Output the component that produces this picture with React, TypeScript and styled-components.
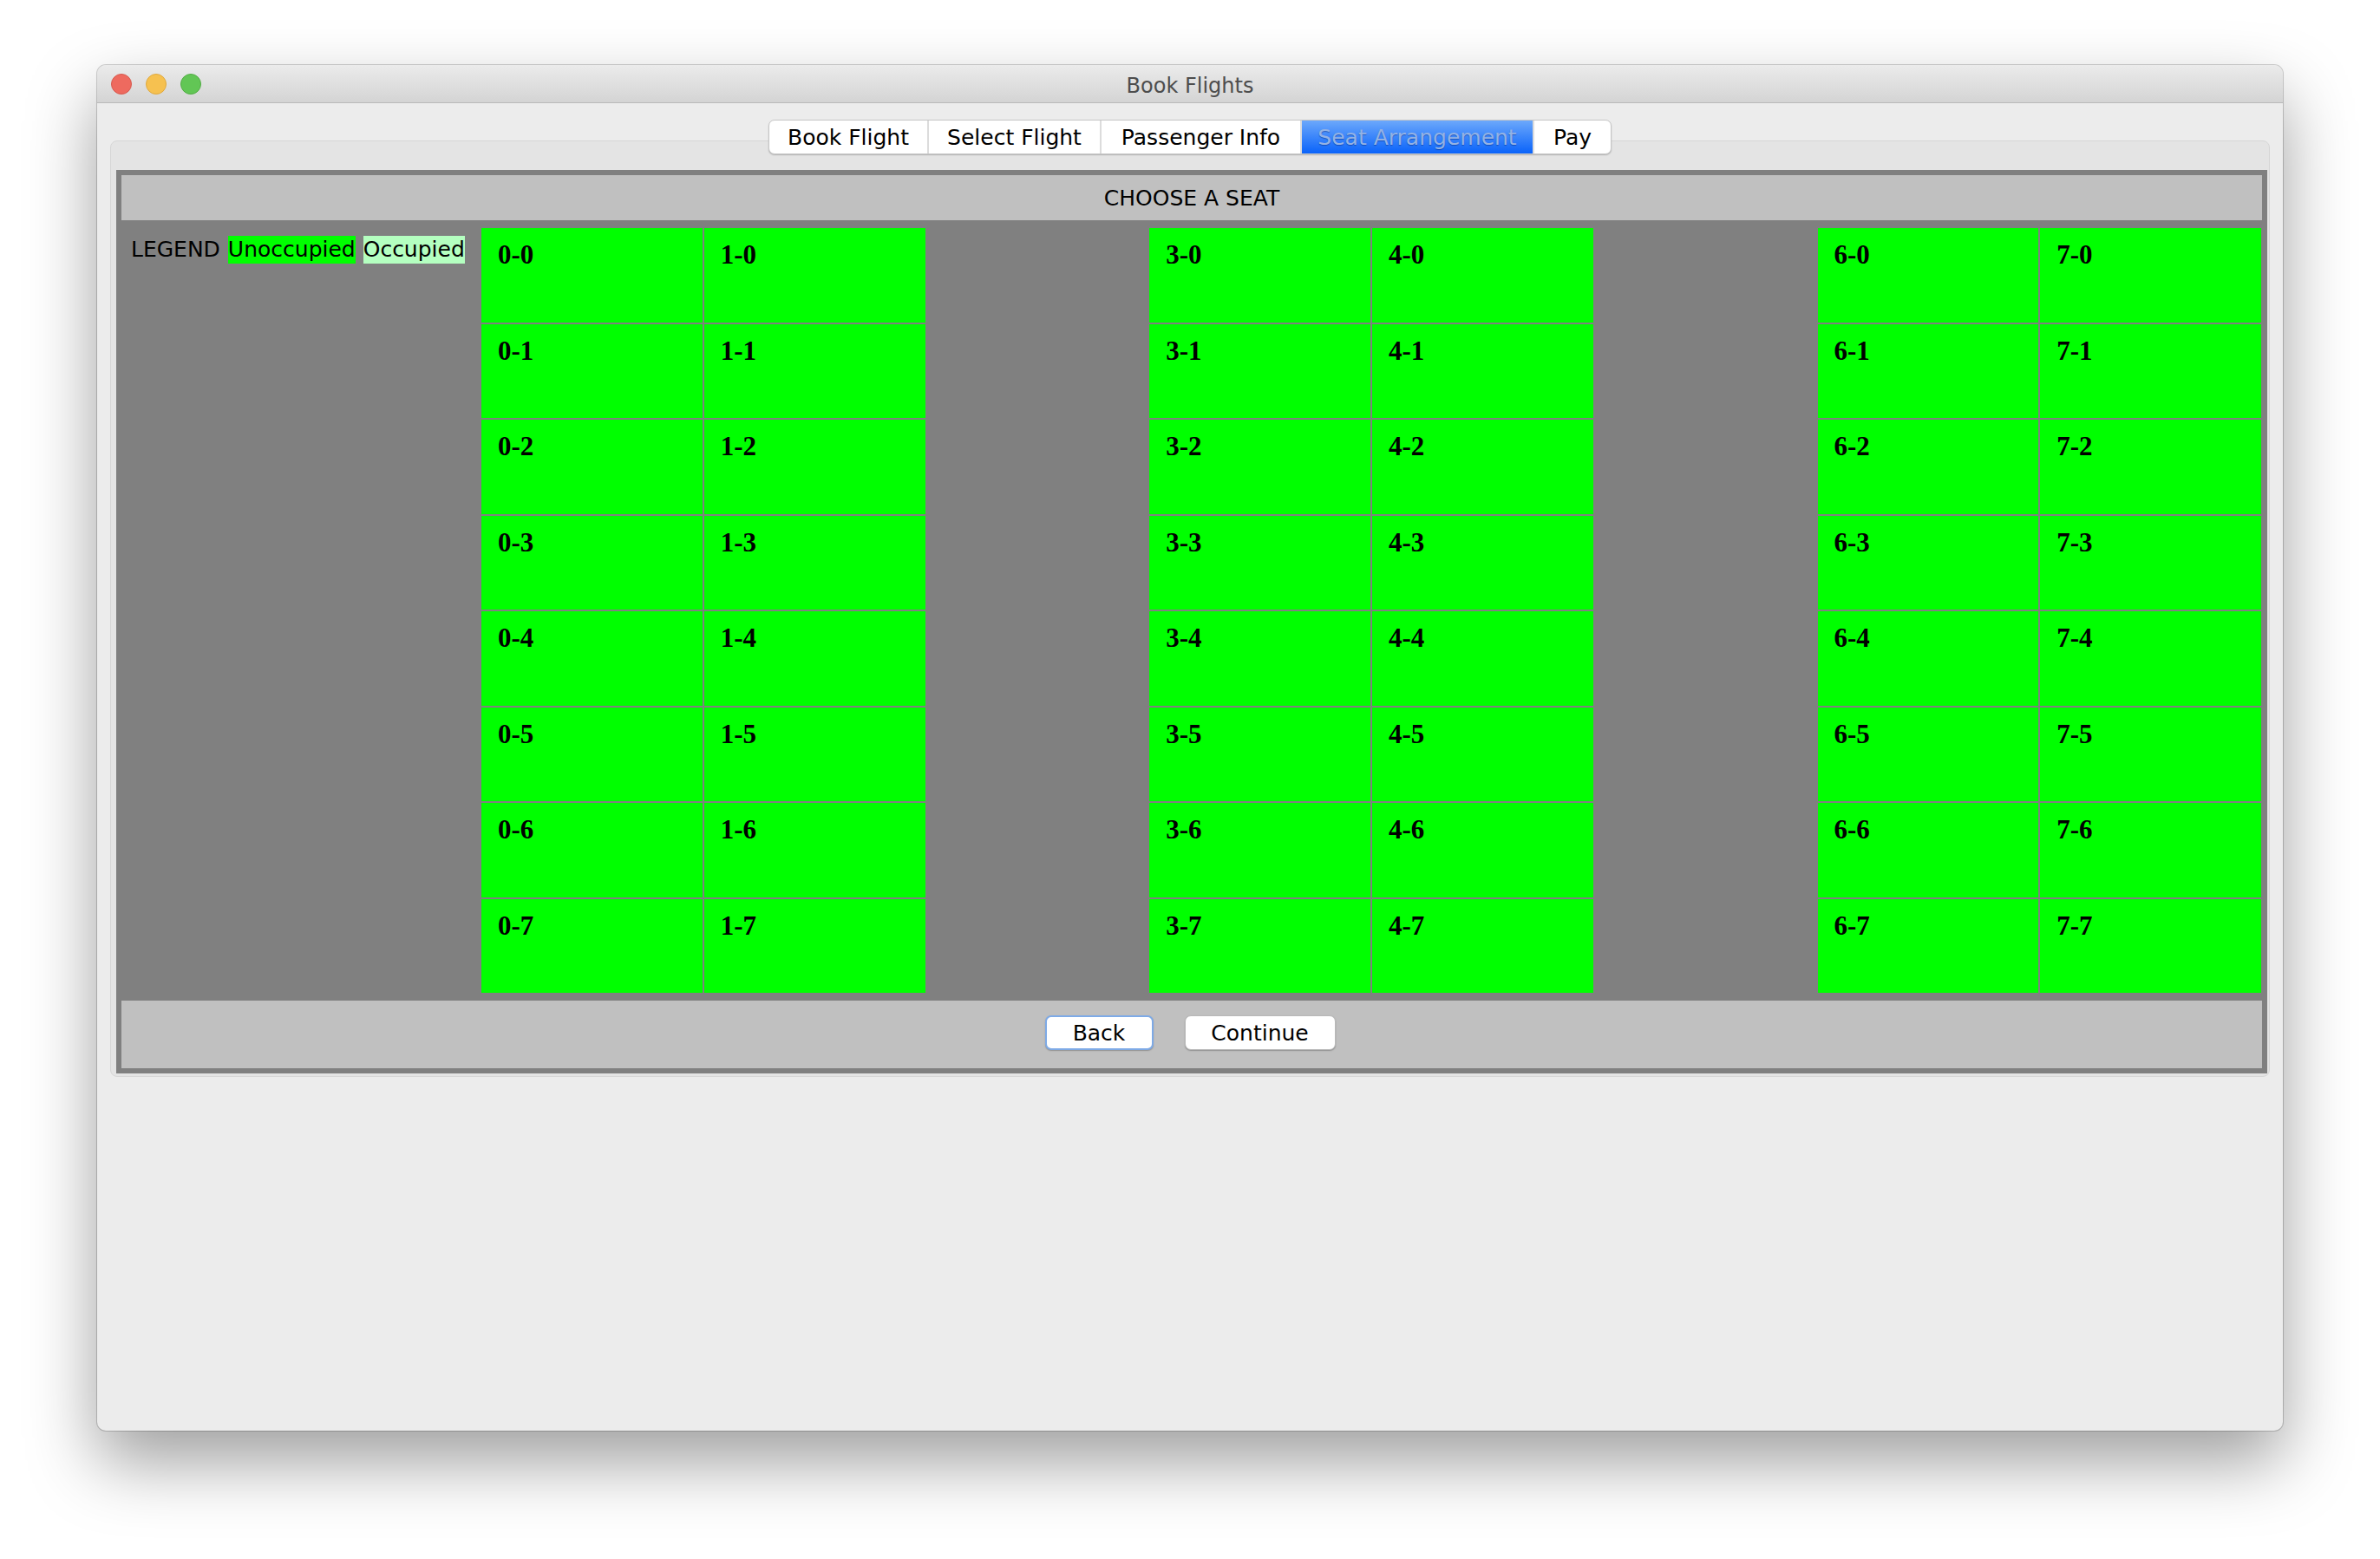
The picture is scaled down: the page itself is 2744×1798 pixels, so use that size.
import React from 'react';
import styled, { createGlobalStyle } from 'styled-components';

const GlobalStyle = createGlobalStyle`
  html, body {
    margin: 0;
    padding: 0;
    background: #ffffff;
  }
`;

const Page = styled.div`
  width: 2744px;
  height: 1798px;
  padding: 75px 0 0 112px;
  box-sizing: border-box;
  overflow: hidden;
  font-family: "DejaVu Sans", "Liberation Sans", sans-serif;
`;

const Window = styled.div`
  width: 2520px;
  height: 1575px;
  border-radius: 10px;
  overflow: hidden;
  background: #ececec;
  box-shadow: 0 36px 80px rgba(0, 0, 0, 0.38), 0 0 0 1px rgba(0, 0, 0, 0.18);
  display: flex;
  flex-direction: column;
`;

const TitleBar = styled.div`
  height: 44px;
  flex-shrink: 0;
  box-sizing: border-box;
  border-bottom: 1px solid #b9b9b9;
  background: linear-gradient(#ebebeb, #d4d4d4);
  display: grid;
  grid-template-columns: 1fr auto 1fr;
  align-items: center;
  padding: 0 16px;
`;

const Lights = styled.div`
  display: flex;
  gap: 16px;
`;

const Light = styled.span<{ $fill: string; $ring: string }>`
  width: 24px;
  height: 24px;
  border-radius: 50%;
  box-sizing: border-box;
  background: ${(p) => p.$fill};
  border: 1px solid ${(p) => p.$ring};
`;

const Title = styled.div`
  font-size: 24px;
  color: #4d4d4d;
  padding-top: 4px;
`;

const Body = styled.div`
  flex: 1;
  padding: 19px 15px 0 15px;
  display: flex;
  flex-direction: column;
`;

const TabStrip = styled.div`
  position: relative;
  z-index: 1;
  display: flex;
  justify-content: center;
`;

const TabGroup = styled.div`
  display: flex;
  height: 40px;
  background: #ffffff;
  border: 1px solid #c6c6c6;
  border-radius: 7px;
  box-sizing: border-box;
  box-shadow: 0 1px 1.5px rgba(0, 0, 0, 0.22);
  overflow: hidden;
`;

const Tab = styled.div<{ $w: number; $active?: boolean }>`
  width: ${(p) => p.$w}px;
  display: flex;
  align-items: center;
  justify-content: center;
  font-size: 25px;
  box-sizing: border-box;
  color: ${(p) => (p.$active ? '#93b2e4' : '#000000')};
  background: ${(p) => (p.$active ? 'linear-gradient(#6ca8fb, #0a63fa)' : 'transparent')};
  text-shadow: ${(p) => (p.$active ? '0 1px 1px rgba(0, 30, 110, 0.45)' : 'none')};
  & + & {
    border-left: ${(p) => (p.$active ? 'none' : '2px solid #dcdcdc')};
  }
`;

const TabPane = styled.div`
  margin-top: -16px;
  padding: 33px 2px 3px 6px;
  border: 1px solid #d6d6d6;
  border-radius: 8px;
  background: #e4e4e4;
`;

const SeatPanel = styled.div`
  border: 6px solid #808080;
  background: #808080;
  display: flex;
  flex-direction: column;
`;

const PanelHeader = styled.div`
  height: 52px;
  background: #c0c0c0;
  display: flex;
  align-items: center;
  justify-content: center;
  font-size: 25px;
  color: #000;
`;

const Middle = styled.div`
  display: flex;
  padding: 9px 1px 9px 0;
`;

const Legend = styled.div`
  width: 415px;
  flex-shrink: 0;
  display: flex;
  align-items: flex-start;
  gap: 9px;
  padding: 9px 0 0 11px;
  box-sizing: border-box;
`;

const LegendItem = styled.span<{ $bg?: string }>`
  height: 32px;
  line-height: 32px;
  font-size: 25px;
  white-space: nowrap;
  color: #000;
  background: ${(p) => p.$bg || 'transparent'};
`;

const SeatGrid = styled.div`
  flex: 1;
  height: 882px;
  display: grid;
  grid-template-columns: repeat(8, 1fr);
  grid-template-rows: repeat(8, 1fr);
  gap: 2px;
`;

const Seat = styled.div<{ $occupied?: boolean }>`
  background: ${(p) => (p.$occupied ? '#b4ffc0' : '#00ff00')};
  font-family: "Liberation Serif", "Times New Roman", serif;
  font-weight: bold;
  font-size: 31px;
  padding: 13px 19px;
  box-sizing: border-box;
  color: #000;
`;

const Aisle = styled.div``;

const Footer = styled.div`
  height: 78px;
  background: #c0c0c0;
  display: flex;
  justify-content: center;
  align-items: flex-start;
  padding-top: 17px;
  padding-right: 4px;
  box-sizing: border-box;
  gap: 36px;
`;

const Button = styled.button<{ $w: number; $focused?: boolean }>`
  width: ${(p) => p.$w}px;
  height: 40px;
  background: #ffffff;
  border-radius: 7px;
  font-family: "DejaVu Sans", "Liberation Sans", sans-serif;
  font-size: 25px;
  color: #000;
  padding: 0;
  box-sizing: border-box;
  border: ${(p) => (p.$focused ? '2px solid #7eaae6' : '1px solid #b8b8b8')};
  box-shadow: 0 1px 1.5px rgba(0, 0, 0, 0.25);
`;

const tabs = [
  { label: 'Book Flight', w: 182 },
  { label: 'Select Flight', w: 199 },
  { label: 'Passenger Info', w: 231 },
  { label: 'Seat Arrangement', w: 268, active: true },
  { label: 'Pay', w: 90 },
];

const aisleCols = [2, 5];

const App = () => {
  const cells: React.ReactNode[] = [];
  for (let row = 0; row < 8; row += 1) {
    for (let col = 0; col < 8; col += 1) {
      if (aisleCols.includes(col)) {
        cells.push(<Aisle key={`${col}-${row}`} />);
      } else {
        cells.push(
          <Seat key={`${col}-${row}`}>
            {`${col}-${row}`}
          </Seat>,
        );
      }
    }
  }

  return (
    <>
      <GlobalStyle />
      <Page>
        <Window>
          <TitleBar>
            <Lights>
              <Light $fill="#ee6a5f" $ring="#d65a4f" />
              <Light $fill="#f6c150" $ring="#dfa93e" />
              <Light $fill="#62c655" $ring="#52ac45" />
            </Lights>
            <Title>Book Flights</Title>
            <div />
          </TitleBar>
          <Body>
            <TabStrip>
              <TabGroup>
                {tabs.map((t) => (
                  <Tab key={t.label} $w={t.w} $active={t.active}>
                    {t.label}
                  </Tab>
                ))}
              </TabGroup>
            </TabStrip>
            <TabPane>
              <SeatPanel>
                <PanelHeader>CHOOSE A SEAT</PanelHeader>
                <Middle>
                  <Legend>
                    <LegendItem>LEGEND</LegendItem>
                    <LegendItem $bg="#00ff00">Unoccupied</LegendItem>
                    <LegendItem $bg="#b4ffc0">Occupied</LegendItem>
                  </Legend>
                  <SeatGrid>{cells}</SeatGrid>
                </Middle>
                <Footer>
                  <Button $w={125} $focused>Back</Button>
                  <Button $w={174}>Continue</Button>
                </Footer>
              </SeatPanel>
            </TabPane>
          </Body>
        </Window>
      </Page>
    </>
  );
};

export default App;
